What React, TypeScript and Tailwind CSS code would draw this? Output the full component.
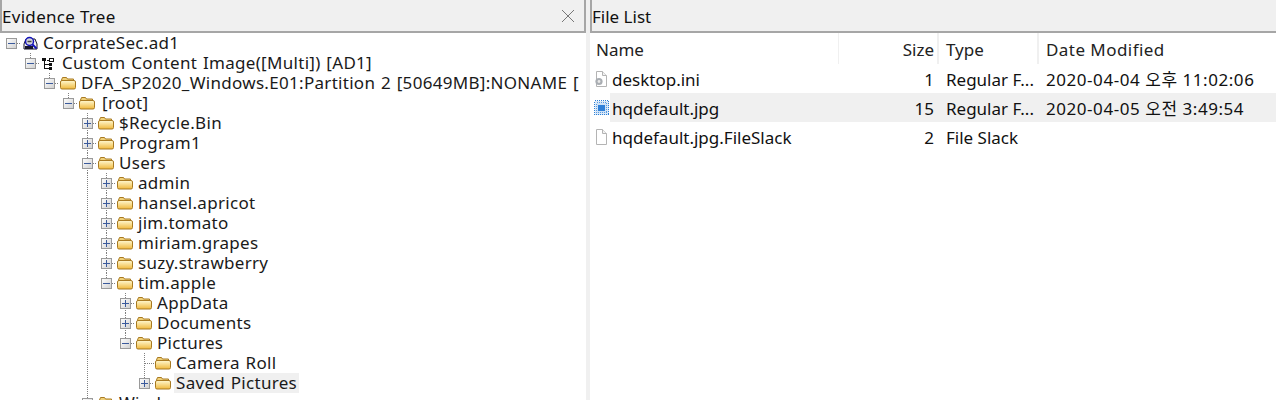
const font = "font-['Noto_Sans','Noto_Sans_CJK_KR',sans-serif]";

type Node = {
  level: number;
  label: string;
  icon: "case" | "tree" | "folder";
  exp?: "+" | "-";
  guides: number[]; // levels with a passing vertical line
  up?: boolean; // line comes from above into this row's own cell
  down?: boolean; // line goes on below this row's own cell
  selected?: boolean;
};

const nodes: Node[] = [
  { level: 0, label: "CorprateSec.ad1", icon: "case", exp: "-", guides: [] },
  { level: 1, label: "Custom Content Image([Multi]) [AD1]", icon: "tree", exp: "-", guides: [], up: true },
  { level: 2, label: "DFA_SP2020_Windows.E01:Partition 2 [50649MB]:NONAME [", icon: "folder", exp: "-", guides: [], up: true },
  { level: 3, label: "[root]", icon: "folder", exp: "-", guides: [], up: true },
  { level: 4, label: "$Recycle.Bin", icon: "folder", exp: "+", guides: [], up: true, down: true },
  { level: 4, label: "Program1", icon: "folder", exp: "+", guides: [], up: true, down: true },
  { level: 4, label: "Users", icon: "folder", exp: "-", guides: [], up: true, down: true },
  { level: 5, label: "admin", icon: "folder", exp: "+", guides: [4], up: true, down: true },
  { level: 5, label: "hansel.apricot", icon: "folder", exp: "+", guides: [4], up: true, down: true },
  { level: 5, label: "jim.tomato", icon: "folder", exp: "+", guides: [4], up: true, down: true },
  { level: 5, label: "miriam.grapes", icon: "folder", exp: "+", guides: [4], up: true, down: true },
  { level: 5, label: "suzy.strawberry", icon: "folder", exp: "+", guides: [4], up: true, down: true },
  { level: 5, label: "tim.apple", icon: "folder", exp: "-", guides: [4], up: true },
  { level: 6, label: "AppData", icon: "folder", exp: "+", guides: [4], up: true, down: true },
  { level: 6, label: "Documents", icon: "folder", exp: "+", guides: [4], up: true, down: true },
  { level: 6, label: "Pictures", icon: "folder", exp: "-", guides: [4], up: true },
  { level: 7, label: "Camera Roll", icon: "folder", guides: [4], up: true, down: true },
  { level: 7, label: "Saved Pictures", icon: "folder", exp: "+", guides: [4], up: true, selected: true },
  { level: 4, label: "Windows", icon: "folder", exp: "+", guides: [], up: true, down: true },
];

function Guide() {
  return (
    <svg width="19" height="20" className="shrink-0">
      <line x1="9.5" y1="0" x2="9.5" y2="20" stroke="#808080" strokeDasharray="1 1" />
    </svg>
  );
}

function Expander({ exp, up, down }: { exp?: "+" | "-"; up?: boolean; down?: boolean }) {
  return (
    <svg width="19" height="20" className="shrink-0">
      <defs>
        <linearGradient id="exp" x1="0" y1="0" x2="1" y2="1">
          <stop offset="0" stopColor="#ffffff" />
          <stop offset="1" stopColor="#cfcfcf" />
        </linearGradient>
      </defs>
      {up && <line x1="9.5" y1="0" x2="9.5" y2={exp ? 5 : 10} stroke="#808080" strokeDasharray="1 1" />}
      {down && <line x1="9.5" y1={exp ? 15 : 10} x2="9.5" y2="20" stroke="#808080" strokeDasharray="1 1" />}
      <line x1={exp ? 15 : 10} y1="10.5" x2="20" y2="10.5" stroke="#808080" strokeDasharray="1 1" />
      {exp && (
        <g shapeRendering="crispEdges">
          <rect x="4.5" y="5.5" width="10" height="10" fill="url(#exp)" stroke="#9a9a9a" />
          <line x1="6" y1="10.5" x2="13" y2="10.5" stroke="#3a5a9c" />
          {exp === "+" && <line x1="9.5" y1="7" x2="9.5" y2="14" stroke="#3a5a9c" />}
        </g>
      )}
    </svg>
  );
}

function FolderIcon() {
  return (
    <svg width="16" height="14" viewBox="0 0 16 14" className="shrink-0">
      <defs>
        <linearGradient id="fld" x1="0" y1="0" x2="0" y2="1">
          <stop offset="0" stopColor="#fff8d0" />
          <stop offset="1" stopColor="#f0b93c" />
        </linearGradient>
      </defs>
      <path d="M1.5 4 L2.5 1.5 H6.5 L7.5 3 H13.5 V5.5 H1.5 Z" fill="#f0d078" stroke="#a87a22" />
      <rect x="0.5" y="4.5" width="15" height="8.5" rx="1.5" fill="url(#fld)" stroke="#a87a22" />
    </svg>
  );
}

function CaseIcon() {
  return (
    <svg width="15" height="14" viewBox="0 0 15 14" className="shrink-0">
      <path d="M1 8 L3 3 H12 L14 8 V13 H1 Z" fill="#f4f4f4" stroke="#15152a" />
      <rect x="2" y="10" width="8" height="3" fill="#15152a" />
      <circle cx="6.5" cy="5.5" r="4" fill="#d4d6de" stroke="#1212b8" strokeWidth="1.5" />
      <path d="M4.5 5.5 H8.5" stroke="#444" strokeWidth="1.5" />
      <line x1="9.5" y1="8.5" x2="13.5" y2="12.5" stroke="#1212b8" strokeWidth="2" />
    </svg>
  );
}

function HierarchyIcon() {
  return (
    <svg width="13" height="13" viewBox="0 0 13 13" className="shrink-0" shapeRendering="crispEdges">
      <rect x="0" y="1" width="4" height="3" fill="#111" />
      <path d="M2 4 V11 H7 M2 7 H7 M5 3 H7" fill="none" stroke="#111" />
      <rect x="7" y="1" width="4" height="3" fill="#fff" stroke="#111" />
      <rect x="7" y="6" width="3" height="3" fill="#111" />
      <rect x="7" y="10" width="3" height="3" fill="#111" />
    </svg>
  );
}

function TreeRow({ node }: { node: Node }) {
  const cells = [];
  for (let i = 0; i < node.level; i++) {
    cells.push(node.guides.includes(i) ? <Guide key={i} /> : <div key={i} className="w-[19px] shrink-0" />);
  }
  return (
    <div className="flex h-5 items-center pl-[2px] whitespace-nowrap">
      {cells}
      <Expander exp={node.exp} up={node.up} down={node.down} />
      <div className={node.icon === "folder" ? "ml-px flex w-[16px] justify-center" : "ml-[2px] flex w-[15px]"}>
        {node.icon === "folder" && <FolderIcon />}
        {node.icon === "case" && <CaseIcon />}
        {node.icon === "tree" && <HierarchyIcon />}
      </div>
      <span
        className={`ml-[3px] flex h-5 items-center text-[17px] leading-5 tracking-[0.3px] [word-spacing:1px] text-[#1a1a1a] ${
          node.label === "[root]" ? "pl-[4px] pr-[2px]" : "px-[2px]"
        } ${node.selected ? "bg-[#f0f0f0]" : ""}`}
      >
        {node.label}
      </span>
    </div>
  );
}

function PageIcon({ kind }: { kind: "ini" | "jpg" | "blank" }) {
  if (kind === "jpg") {
    return (
      <svg width="16" height="16" viewBox="0 0 16 16" shapeRendering="crispEdges">
        <rect x="0.5" y="0.5" width="14" height="14" fill="#dbe9f8" stroke="#2b7fd6" strokeDasharray="1 1" />
        <rect x="2.5" y="2.5" width="10" height="10" fill="#cfe2f6" stroke="#5a9be0" strokeDasharray="1 1" />
        <rect x="4" y="5" width="7" height="6" fill="#2f80d8" />
      </svg>
    );
  }
  return (
    <svg width="14" height="16" viewBox="0 0 14 16">
      <path d="M2.5 0.5 H8.5 L12.5 4.5 V15.5 H2.5 Z" fill="#fff" stroke="#b4b4b4" />
      <path d="M8.5 0.5 V4.5 H12.5" fill="#f2f2f2" stroke="#b4b4b4" />
      {kind === "ini" && (
        <>
          <circle cx="5" cy="10.5" r="3.6" fill="#a9adb2" />
          <circle cx="5" cy="10.5" r="1.4" fill="#e8e8e8" />
        </>
      )}
    </svg>
  );
}

const files = [
  { name: "desktop.ini", icon: "ini" as const, size: "1", type: "Regular F...", date: "2020-04-04 오후 11:02:06" },
  { name: "hqdefault.jpg", icon: "jpg" as const, size: "15", type: "Regular F...", date: "2020-04-05 오전 3:49:54", hot: true },
  { name: "hqdefault.jpg.FileSlack", icon: "blank" as const, size: "2", type: "File Slack", date: "" },
];

function TitleBar({ children, className }: { children: React.ReactNode; className?: string }) {
  return (
    <div
      className={`flex h-[33px] shrink-0 items-center justify-between border-b-2 border-l-2 border-[#a6a6a6] bg-[#f0f0f0] pt-[2px] text-[17px] leading-6 text-[#111] ${className ?? ""}`}
    >
      {children}
    </div>
  );
}

export default function App() {
  return (
    <div className={`flex h-[400px] w-[1276px] overflow-hidden bg-[#f0f0f0] ${font}`}>
      {/* Evidence tree */}
      <div className="flex w-[586px] shrink-0 flex-col overflow-hidden">
        <TitleBar className="border-r-2">
          <span className="tracking-[0.3px]">Evidence Tree</span>
          <svg width="14" height="14" viewBox="0 0 14 14" className="mr-[9px] -mt-[2px]">
            <path d="M1 1 L13 13 M13 1 L1 13" stroke="#777" strokeWidth="1" />
          </svg>
        </TitleBar>
        <div className="flex-1 overflow-hidden bg-white">
          {nodes.map((n) => (
            <TreeRow key={n.label} node={n} />
          ))}
        </div>
      </div>

      {/* File list */}
      <div className="ml-[4px] flex min-w-0 flex-1 flex-col">
        <TitleBar>
          <span>File List</span>
        </TitleBar>
        <div className="flex-1 bg-white pl-px text-[17px] leading-6 text-[#111]">
          <div className="flex h-[31px] items-center text-[#222]">
            <div className="flex h-full w-[248px] items-center border-r border-[#f0f0f0] pl-[5px] pt-[3px]">Name</div>
            <div className="flex h-full w-[100px] items-center justify-end border-r-2 border-[#f0f0f0] pr-[3px] pt-[3px]">Size</div>
            <div className="flex h-full w-[100px] items-center border-r-2 border-[#f0f0f0] pl-[7px] pt-[3px]">Type</div>
            <div className="flex h-full items-center pl-[7px] pt-[3px] tracking-[0.45px]">Date Modified</div>
          </div>
          {files.map((f) => (
            <div key={f.name} className="flex h-[29px] items-center">
              <div className="flex h-full w-[19px] shrink-0 items-center pl-[3px]">
                <PageIcon kind={f.icon} />
              </div>
              <div className={`flex h-full flex-1 items-center pt-[3px] ${f.hot ? "bg-[#f0f0f0]" : ""}`}>
                <div className="w-[229px] shrink-0 pl-[2px]">{f.name}</div>
                <div className="w-[100px] shrink-0 pr-[5px] text-right">{f.size}</div>
                <div className="w-[100px] shrink-0 pl-[7px]">{f.type}</div>
                <div className="whitespace-nowrap pl-[7px] tracking-[0.55px]">{f.date}</div>
              </div>
            </div>
          ))}
        </div>
      </div>
    </div>
  );
}
